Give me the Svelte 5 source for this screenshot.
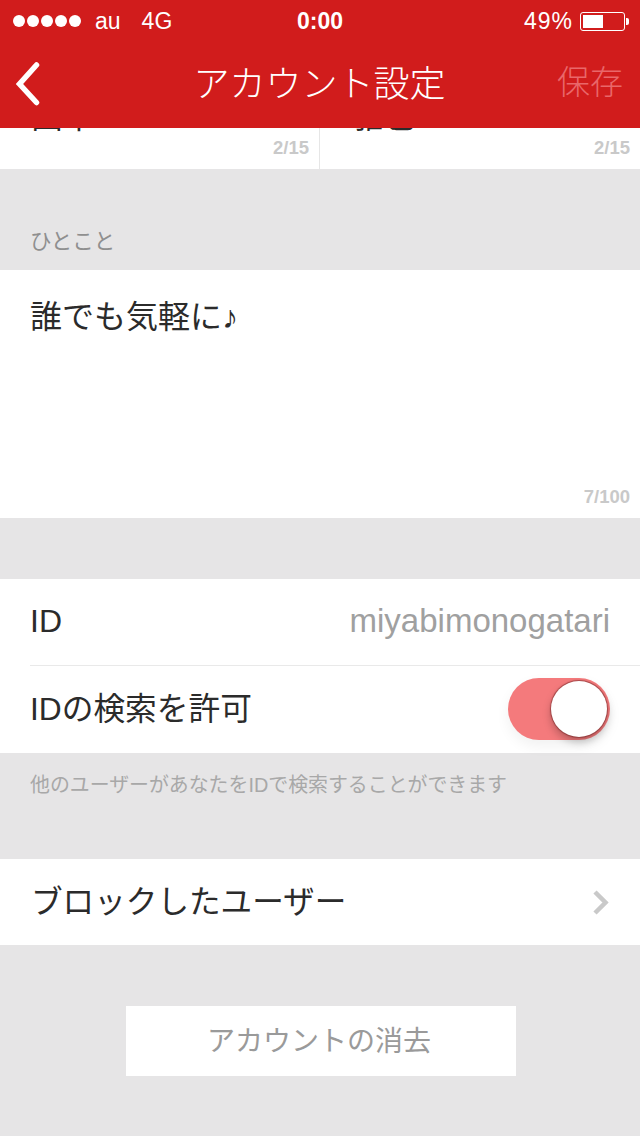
<script>
  let allowSearch = $state(true);
  const dots = [0, 1, 2, 3, 4];
</script>

<div class="page">
  <header>
    <div class="status">
      <div class="carrier">
        <span class="dots">
          {#each dots as d}
            <i></i>
          {/each}
        </span>
        <span class="au">au</span>
        <span>4G</span>
      </div>
      <div class="time">0:00</div>
      <div class="power">
        <span>49%</span>
        <span class="battery"><b></b></span>
        <span class="nub"></span>
      </div>
    </div>
    <nav>
      <svg class="back" width="30" height="46" viewBox="0 0 30 46">
        <path d="M23.5 5 L6.5 24 L23.5 42.5" fill="none" stroke="#fff" stroke-width="5.5" stroke-linecap="round" stroke-linejoin="miter" />
      </svg>
      <div class="title">アカウント設定</div>
      <div class="save">保存</div>
    </nav>
  </header>

  <section class="names">
    <div class="name first">
      <div class="clipped">田中</div>
      <span class="count">2/15</span>
    </div>
    <div class="name second">
      <div class="clipped">雅也</div>
      <span class="count">2/15</span>
    </div>
  </section>

  <div class="label">ひとこと</div>
  <section class="bio">
    <p>誰でも気軽に♪</p>
    <span class="count">7/100</span>
  </section>

  <section class="group">
    <div class="row id">
      <span>ID</span>
      <span class="value">miyabimonogatari</span>
    </div>
    <div class="row search">
      <span class="search-label">IDの検索を許可</span>
      <button class="toggle" class:on={allowSearch} aria-label="IDの検索を許可" onclick={() => (allowSearch = !allowSearch)}>
        <span class="knob"></span>
      </button>
    </div>
  </section>
  <div class="hint">他のユーザーがあなたをIDで検索することができます</div>

  <section class="blocked">
    <span class="blocked-label">ブロックしたユーザー</span>
    <svg width="20" height="28" viewBox="0 0 20 28">
      <path d="M4 4 L14.5 14.5 L4 25" fill="none" stroke="#c9c9c9" stroke-width="4.5" />
    </svg>
  </section>

  <button class="delete">アカウントの消去</button>
</div>

<style>
  :global(body) {
    background: #e6e5e6;
  }

  .page {
    width: 640px;
    height: 1136px;
    overflow: hidden;
    background: #e6e5e6;
    color: #2b2b2b;
    font-family: "Liberation Sans", "Noto Sans CJK JP", sans-serif;
  }

  header {
    position: relative;
    z-index: 1;
    height: 128px;
    background: #d11c1c;
    color: #fff;
  }

  .status {
    display: grid;
    grid-template-columns: 1fr auto 1fr;
    align-items: center;
    height: 42px;
    padding: 0 13px;
    font-size: 23px;
  }

  .carrier {
    display: flex;
    align-items: center;
  }

  .dots {
    display: flex;
    gap: 2px;
    margin-right: 14px;
  }

  .dots i {
    width: 12px;
    height: 12px;
    border-radius: 50%;
    background: #fff;
  }

  .au {
    margin-right: 21px;
  }

  .time {
    font-weight: bold;
    font-size: 23px;
  }

  .power {
    display: flex;
    align-items: center;
    justify-content: flex-end;
    letter-spacing: 1px;
  }

  .battery {
    width: 45px;
    height: 19px;
    margin-left: 7px;
    padding: 2px;
    box-sizing: border-box;
    display: flex;
    border: 1px solid #fff;
    border-radius: 3px;
  }

  .battery b {
    width: 20px;
    background: #fff;
  }

  .nub {
    width: 3px;
    height: 7px;
    margin-left: 1px;
    margin-right: -2px;
    background: #fff;
    border-radius: 0 2px 2px 0;
  }

  nav {
    display: grid;
    grid-template-columns: 1fr auto 1fr;
    align-items: center;
    height: 86px;
    padding: 0 17px 4px 13px;
    box-sizing: border-box;
  }

  .back {
    display: block;
  }

  .title {
    font-size: 36px;
    font-weight: 300;
    margin: -4px 0 0 3px;
  }

  .save {
    justify-self: end;
    font-size: 33px;
    font-weight: 300;
    color: #e9676a;
    margin-top: -6px;
  }

  .names {
    display: flex;
    height: 41px;
    background: #fff;
  }

  .name {
    position: relative;
    overflow: hidden;
  }

  .name.first {
    width: 319px;
  }

  .name.second {
    flex: 1;
    border-left: 1px solid #e6e6e6;
  }

  .clipped {
    margin: -34px 0 0 31px;
    font-size: 32px;
    line-height: 46px;
  }

  .count {
    position: absolute;
    right: 10px;
    bottom: 10px;
    font-size: 18.5px;
    font-weight: bold;
    color: #c9c9c9;
  }

  .label {
    height: 101px;
    box-sizing: border-box;
    padding: 61px 0 0 30px;
    font-size: 21.5px;
    line-height: 24px;
    color: #8f8f8f;
  }

  .bio {
    position: relative;
    height: 248px;
    background: #fff;
  }

  .bio p {
    margin: 0;
    padding: 24px 30px 0;
    font-size: 32px;
    line-height: 46px;
  }

  .bio .count {
    bottom: 10px;
  }

  .group {
    margin-top: 61px;
    padding-left: 30px;
    background: #fff;
  }

  .row {
    display: flex;
    align-items: center;
    justify-content: space-between;
    height: 87px;
    padding-right: 30px;
    font-size: 32px;
  }

  .row.id {
    border-bottom: 1px solid #e9e9e9;
    box-sizing: border-box;
    padding-bottom: 2px;
  }

  .row.search {
    box-sizing: border-box;
    padding-bottom: 2px;
  }

  .search-label {
    font-size: 31.7px;
    margin-bottom: 6px;
  }

  .value {
    color: #a0a0a0;
    font-size: 33px;
  }

  .toggle {
    position: relative;
    width: 102px;
    height: 62px;
    padding: 0;
    border: none;
    border-radius: 31px;
    background: #dcdcdc;
    box-shadow: 0 6px 14px rgba(0, 0, 0, 0.06);
  }

  .toggle.on {
    background: #f47a7c;
  }

  .knob {
    position: absolute;
    top: 3px;
    left: 3px;
    width: 56px;
    height: 56px;
    border-radius: 50%;
    background: #fff;
    box-shadow: 0 0 1px 1px rgba(120, 40, 40, 0.6), 0 5px 8px rgba(0, 0, 0, 0.25);
  }

  .toggle.on .knob {
    left: 43px;
  }

  .hint {
    height: 106px;
    box-sizing: border-box;
    padding: 19px 0 0 30px;
    font-size: 19.9px;
    line-height: 26px;
    color: #a8a8a8;
  }

  .blocked {
    display: flex;
    align-items: center;
    justify-content: space-between;
    height: 86px;
    padding: 0 29px 0 31px;
    background: #fff;
    font-size: 31.6px;
  }

  .blocked-label {
    margin-bottom: 6px;
  }

  .delete {
    display: block;
    width: 390px;
    height: 70px;
    margin: 61px 0 0 126px;
    padding: 0 4px 4px 0;
    border: none;
    background: #fff;
    color: #9a9a9a;
    font-family: inherit;
    font-size: 28px;
  }
</style>
